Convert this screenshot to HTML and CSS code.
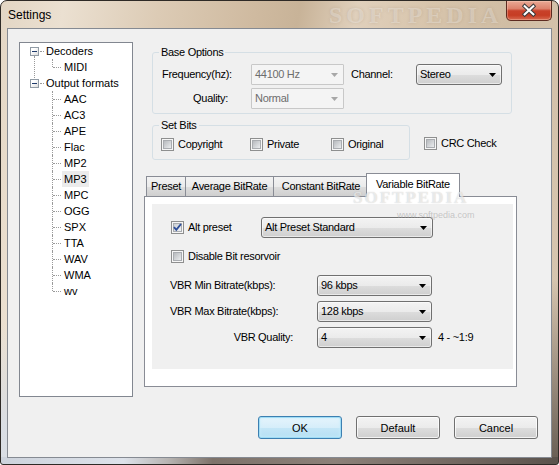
FILE: index.html
```html
<!DOCTYPE html>
<html>
<head>
<meta charset="utf-8">
<title>Settings</title>
<link rel="stylesheet" href="styles.css">
</head>
<body>
<svg class="svgdefs" width="0" height="0" aria-hidden="true">
  <defs>
    <linearGradient id="cbg" x1="0" y1="0" x2="1" y2="1">
      <stop offset="0" stop-color="#b3b6ba"/>
      <stop offset="1" stop-color="#eef0f2"/>
    </linearGradient>
    <linearGradient id="cbgc" x1="0" y1="0" x2="1" y2="1">
      <stop offset="0" stop-color="#c9cdd2"/>
      <stop offset="1" stop-color="#f4f5f6"/>
    </linearGradient>
  </defs>
</svg>
<div class="window">
  <div class="titlebar">
    <span class="title">Settings</span>
    <span class="wm-title">SOFTPEDIA</span>
    <div class="close">
      <svg width="46" height="19" viewBox="0 0 46 19">
        <path d="M18.5 5 L27.5 13.5 M27.5 5 L18.5 13.5" stroke="#3a3a3a" stroke-width="4.2" stroke-linecap="square" fill="none"/>
        <path d="M18.5 5 L27.5 13.5 M27.5 5 L18.5 13.5" stroke="#ffffff" stroke-width="2.2" stroke-linecap="square" fill="none"/>
      </svg>
    </div>
  </div>
  <div class="client">
    <div class="main">
      <div class="tree">
        <div class="row root"><span class="exp"></span><span class="hline"></span><span class="lbl">Decoders</span></div>
        <div class="kids first">
          <div class="row leaf last"><span class="lbl">MIDI</span></div>
        </div>
        <div class="row root"><span class="exp"></span><span class="hline"></span><span class="lbl">Output formats</span></div>
        <div class="kids">
          <div class="row leaf"><span class="lbl">AAC</span></div>
          <div class="row leaf"><span class="lbl">AC3</span></div>
          <div class="row leaf"><span class="lbl">APE</span></div>
          <div class="row leaf"><span class="lbl">Flac</span></div>
          <div class="row leaf"><span class="lbl">MP2</span></div>
          <div class="row leaf"><span class="lbl sel">MP3</span></div>
          <div class="row leaf"><span class="lbl">MPC</span></div>
          <div class="row leaf"><span class="lbl">OGG</span></div>
          <div class="row leaf"><span class="lbl">SPX</span></div>
          <div class="row leaf"><span class="lbl">TTA</span></div>
          <div class="row leaf"><span class="lbl">WAV</span></div>
          <div class="row leaf"><span class="lbl">WMA</span></div>
          <div class="row leaf last"><span class="lbl">wv</span></div>
        </div>
      </div>

      <div class="right">
        <fieldset class="group base">
          <legend>Base Options</legend>
          <div class="base-grid">
            <span class="flabel">Frequency(hz):</span>
            <div class="combo disabled w93"><span class="val">44100 Hz</span><svg class="arrow" width="7" height="4" viewBox="0 0 7 4"><path d="M0 0H7L3.5 4Z" fill="#a7a7a7"/></svg></div>
            <span class="flabel">Channel:</span>
            <div class="combo w86"><span class="val">Stereo</span><svg class="arrow" width="7" height="4" viewBox="0 0 7 4"><path d="M0 0H7L3.5 4Z" fill="#000"/></svg></div>
            <span class="flabel qlabel">Quality:</span>
            <div class="combo disabled w93"><span class="val">Normal</span><svg class="arrow" width="7" height="4" viewBox="0 0 7 4"><path d="M0 0H7L3.5 4Z" fill="#a7a7a7"/></svg></div>
          </div>
        </fieldset>

        <div class="bits-row">
          <fieldset class="group bits">
            <legend>Set Bits</legend>
            <div class="bits-body">
              <label class="check w89"><svg class="cb" width="13" height="13" viewBox="0 0 13 13"><rect x=".5" y=".5" width="12" height="12" fill="#f6f6f6" stroke="#8e8f8f"/><rect x="2.5" y="2.5" width="8" height="8" fill="url(#cbg)" stroke="#a9acb0"/></svg><span>Copyright</span></label>
              <label class="check w81"><svg class="cb" width="13" height="13" viewBox="0 0 13 13"><rect x=".5" y=".5" width="12" height="12" fill="#f6f6f6" stroke="#8e8f8f"/><rect x="2.5" y="2.5" width="8" height="8" fill="url(#cbg)" stroke="#a9acb0"/></svg><span>Private</span></label>
              <label class="check"><svg class="cb" width="13" height="13" viewBox="0 0 13 13"><rect x=".5" y=".5" width="12" height="12" fill="#f6f6f6" stroke="#8e8f8f"/><rect x="2.5" y="2.5" width="8" height="8" fill="url(#cbg)" stroke="#a9acb0"/></svg><span>Original</span></label>
            </div>
          </fieldset>
          <label class="check crc"><svg class="cb" width="13" height="13" viewBox="0 0 13 13"><rect x=".5" y=".5" width="12" height="12" fill="#f6f6f6" stroke="#8e8f8f"/><rect x="2.5" y="2.5" width="8" height="8" fill="url(#cbg)" stroke="#a9acb0"/></svg><span>CRC Check</span></label>
        </div>

        <div class="tabctl">
          <div class="tabs">
            <span class="tab first w-preset">Preset</span>
            <span class="tab w-avg">Average BitRate</span>
            <span class="tab w-const">Constant BitRate</span>
            <span class="tab active">Variable BitRate</span>
          </div>
          <div class="panel">
            <div class="page">
              <div class="alt-row">
                <label class="check w90"><svg class="cb" width="13" height="13" viewBox="0 0 13 13"><rect x=".5" y=".5" width="12" height="12" fill="#f6f6f6" stroke="#8e8f8f"/><rect x="2.5" y="2.5" width="8" height="8" fill="url(#cbgc)" stroke="#a9acb0"/><path d="M3 6.2 L5.3 8.8 L10 3" stroke="#2f4f9a" stroke-width="1.9" fill="none"/></svg><span>Alt preset</span></label>
                <div class="combo w172"><span class="val">Alt Preset Standard</span><svg class="arrow" width="7" height="4" viewBox="0 0 7 4"><path d="M0 0H7L3.5 4Z" fill="#000"/></svg></div>
              </div>
              <div class="dis-row">
                <label class="check"><svg class="cb" width="13" height="13" viewBox="0 0 13 13"><rect x=".5" y=".5" width="12" height="12" fill="#f6f6f6" stroke="#8e8f8f"/><rect x="2.5" y="2.5" width="8" height="8" fill="url(#cbg)" stroke="#a9acb0"/></svg><span>Disable Bit resorvoir</span></label>
              </div>
              <div class="vbr-grid">
                <span class="flabel">VBR Min Bitrate(kbps):</span>
                <div class="combo w115"><span class="val">96 kbps</span><svg class="arrow" width="7" height="4" viewBox="0 0 7 4"><path d="M0 0H7L3.5 4Z" fill="#000"/></svg></div>
                <span></span>
                <span class="flabel">VBR Max Bitrate(kbps):</span>
                <div class="combo w115"><span class="val">128 kbps</span><svg class="arrow" width="7" height="4" viewBox="0 0 7 4"><path d="M0 0H7L3.5 4Z" fill="#000"/></svg></div>
                <span></span>
                <span class="flabel vq">VBR Quality:</span>
                <div class="combo w115"><span class="val">4</span><svg class="arrow" width="7" height="4" viewBox="0 0 7 4"><path d="M0 0H7L3.5 4Z" fill="#000"/></svg></div>
                <span class="flabel ratio">4 - ~1:9</span>
              </div>
            </div>
          </div>
          <span class="wm-tab">SOFTPEDIA</span>
          <span class="wm-url">www.softpedia.com</span>
        </div>
      </div>
    </div>

    <div class="buttons">
      <button class="btn default">OK</button>
      <button class="btn">Default</button>
      <button class="btn">Cancel</button>
    </div>
  </div>
</div>
</body>
</html>
```
FILE: styles.css
```css
html, body {
  margin: 0;
  padding: 0;
  background: #ffffff;
}

body {
  font-family: "Liberation Sans", Arial, sans-serif;
  font-size: 11px;
  color: #000;
}

.svgdefs {
  position: absolute;
  width: 0;
  height: 0;
  overflow: hidden;
}

.window {
  position: relative;
  width: 559px;
  height: 465px;
  box-sizing: border-box;
  border: 1px solid #2e2a26;
  border-radius: 7px 7px 3px 3px;
  padding: 0 6px 6px 6px;
  display: flex;
  flex-direction: column;
  overflow: hidden;
  background:
    linear-gradient(to right, #cdd3dc 0%, #dde2ea 22%, #b7b4b2 30%, #7d726a 38%, #8c8179 60%, #6f655e 85%, #5a524c 100%) left bottom / 100% 7px no-repeat,
    linear-gradient(to bottom, rgba(255,255,255,0) 70%, rgba(215,222,232,0.85) 92%) left top / 7px 100% no-repeat,
    linear-gradient(to bottom, rgba(90,80,72,0) 60%, rgba(90,80,72,0.9) 100%) right top / 7px 100% no-repeat,
    linear-gradient(100deg, #e3d6c4 0%, #ebe0d1 10%, #dccbb5 25%, #cfbaa0 40%, #c8b398 47%, #e0d0bc 56%, #d7c4ab 68%, #d0bda4 80%, #d9c8b3 100%);
}

/* ---------- title bar ---------- */
.titlebar {
  position: relative;
  height: 27px;
  display: flex;
  align-items: flex-start;
  flex: none;
}

.title {
  padding: 7px 0 0 1px;
  font-size: 12px;
  line-height: 15px;
  color: #000;
}

.wm-title {
  position: absolute;
  left: 322px;
  top: 1px;
  font: bold 24px "Liberation Serif", serif;
  letter-spacing: 4px;
  color: rgba(255, 255, 255, 0.28);
  text-shadow: 0 0 3px rgba(140, 120, 100, 0.25);
}

.close {
  margin-left: auto;
  margin-right: 0;
  width: 46px;
  height: 20px;
  box-sizing: border-box;
  border: 1px solid #5d2a20;
  border-top: none;
  border-radius: 0 0 5px 5px;
  background: linear-gradient(#e9a995 0%, #dc826c 40%, #c8412a 52%, #c63d24 75%, #d86a50 100%);
  box-shadow: inset 0 0 0 1px rgba(255, 220, 200, 0.35);
  display: flex;
  align-items: flex-start;
  justify-content: center;
}

/* ---------- client ---------- */
.client {
  flex: 1;
  background: #f0f0f0;
  border: 1px solid #858a92;
  padding: 13px 13px 0 11px;
  display: flex;
  flex-direction: column;
  min-height: 0;
}

.main {
  display: grid;
  grid-template-columns: 114px 373px;
  column-gap: 11px;
  align-items: start;
}

/* ---------- tree ---------- */
.tree {
  height: 355px;
  box-sizing: border-box;
  border: 1px solid #828790;
  background: #ffffff;
  line-height: 16px;
}

.row {
  position: relative;
  height: 16px;
  display: flex;
  align-items: center;
}

.root {
  padding-left: 10px;
}

.exp {
  position: relative;
  flex: none;
  width: 9px;
  height: 9px;
  box-sizing: border-box;
  border: 1px solid #919ba5;
  background: linear-gradient(135deg, #ffffff 30%, #dcdcdc);
}

.exp::after {
  content: "";
  position: absolute;
  left: 1px;
  top: 3px;
  width: 5px;
  height: 1px;
  background: #1e3a6a;
}

.hline {
  flex: none;
  width: 4px;
  height: 0;
  margin-left: 1px;
  border-top: 1px dotted #9a9a9a;
}

.lbl {
  display: block;
  padding: 0 2px;
  height: 16px;
  line-height: 16px;
  white-space: nowrap;
}

.lbl.sel {
  background: #ebebeb;
}

.leaf {
  padding-left: 42px;
}

.leaf::before {
  content: "";
  position: absolute;
  left: 32px;
  top: 0;
  height: 16px;
  border-left: 1px dotted #9a9a9a;
}

.leaf.last::before {
  height: 8px;
}

.leaf::after {
  content: "";
  position: absolute;
  left: 33px;
  top: 8px;
  width: 8px;
  border-top: 1px dotted #9a9a9a;
}

.kids {
  position: relative;
}

.kids.first::before {
  content: "";
  position: absolute;
  left: 14px;
  top: -3px;
  bottom: -3px;
  border-left: 1px dotted #9a9a9a;
}

/* ---------- right column ---------- */
.right {
  display: flex;
  flex-direction: column;
  padding-top: 4px;
  letter-spacing: -0.3px;
}

fieldset.group {
  margin: 0 0 0 8px;
  padding: 0;
  border: 1px solid #d5dfe5;
  border-radius: 3px;
  min-width: 0;
  box-sizing: border-box;
}

fieldset.group legend {
  margin-left: 6px;
  padding: 0 2px;
  line-height: 13px;
  font-size: 11px;
}

.base {
  width: 360px;
}

.base-grid {
  display: grid;
  grid-template-columns: 89px 100px 65px 86px;
  grid-auto-rows: 21px;
  row-gap: 3px;
  padding: 5px 0 4px 9px;
  align-items: center;
}

.flabel {
  line-height: 13px;
  white-space: nowrap;
}

.qlabel {
  text-align: right;
  padding-right: 23px;
}

.combo {
  box-sizing: border-box;
  height: 21px;
  border: 1px solid #707070;
  border-radius: 3px;
  background: linear-gradient(#f3f3f3 0%, #ebebeb 50%, #dddddd 51%, #cfcfcf 100%);
  box-shadow: inset 0 0 0 1px rgba(255, 255, 255, 0.55);
  display: flex;
  align-items: center;
  padding: 0 5px 0 3px;
  white-space: nowrap;
}

.combo .val {
  flex: 1;
  line-height: 13px;
}

.combo .arrow {
  flex: none;
  display: block;
}

.combo.disabled {
  border-color: #c8c8c8;
  border-radius: 1px;
  background: #f4f4f4;
  color: #6d6d6d;
  box-shadow: none;
}

.w93 { width: 93px; }
.w86 { width: 86px; }
.w172 { width: 172px; }
.w115 { width: 115px; }

/* set bits */
.bits-row {
  display: flex;
  align-items: flex-end;
  margin-top: 5px;
}

.bits {
  width: 258px;
}

.bits-body {
  display: flex;
  padding: 5px 0 7px 8px;
}

.check {
  display: flex;
  align-items: center;
  gap: 4px;
  height: 15px;
  line-height: 13px;
  white-space: nowrap;
}

.check .cb {
  flex: none;
  display: block;
}

.w89 { width: 89px; }
.w81 { width: 81px; }
.w90 { width: 90px; flex: none; }

.crc {
  margin-left: 14px;
  margin-bottom: 9px;
}

/* ---------- tab control ---------- */
.tabctl {
  position: relative;
  margin-top: 13px;
  display: flex;
  flex-direction: column;
}

.tabs {
  display: flex;
  align-items: flex-end;
  height: 23px;
  padding-left: 2px;
}

.tab {
  box-sizing: border-box;
  height: 20px;
  border: 1px solid #898c95;
  border-bottom: none;
  border-left: none;
  background: linear-gradient(#f3f3f3 0%, #ebebeb 50%, #dddddd 51%, #cfcfcf 100%);
  display: flex;
  align-items: center;
  justify-content: center;
  white-space: nowrap;
  line-height: 13px;
  flex: none;
}

.tab.first {
  border-left: 1px solid #898c95;
}

.w-preset { width: 40px; }
.w-avg { width: 88px; }
.w-const { width: 95px; }

.tab.active {
  position: relative;
  z-index: 1;
  width: 94px;
  height: 24px;
  margin-left: -3px;
  margin-bottom: -1px;
  border-left: 1px solid #898c95;
  background: #ffffff;
  padding-bottom: 3px;
}

.panel {
  box-sizing: border-box;
  width: 373px;
  height: 191px;
  border: 1px solid #898c95;
  background: #ffffff;
  padding: 7px 3px 17px 7px;
}

.page {
  height: 100%;
  box-sizing: border-box;
  background: #f0f0f0;
  padding-top: 13px;
}

.alt-row {
  display: flex;
  align-items: center;
  height: 21px;
  padding-left: 19px;
}

.dis-row {
  margin-top: 11px;
  padding-left: 19px;
}

.vbr-grid {
  margin-top: 11px;
  display: grid;
  grid-template-columns: 147px 115px auto;
  grid-auto-rows: 21px;
  row-gap: 5px;
  padding-left: 18px;
  align-items: center;
}

.vq {
  text-align: right;
  padding-right: 24px;
}

.ratio {
  padding-left: 6px;
}

.wm-tab {
  position: absolute;
  z-index: 2;
  left: 209px;
  top: 16px;
  font: bold 17px "Liberation Serif", serif;
  line-height: 17px;
  letter-spacing: 2px;
  color: rgba(255, 255, 255, 0.6);
  text-shadow: 0 0 1px rgba(130, 130, 130, 0.45);
  pointer-events: none;
}

.wm-url {
  position: absolute;
  z-index: 2;
  left: 253px;
  top: 37px;
  font-size: 9px;
  line-height: 10px;
  letter-spacing: 0;
  color: rgba(160, 160, 160, 0.55);
  pointer-events: none;
}

/* ---------- buttons ---------- */
.buttons {
  display: flex;
  justify-content: flex-end;
  gap: 14px;
  margin-top: 19px;
}

.btn {
  width: 84px;
  height: 23px;
  box-sizing: border-box;
  margin: 0;
  padding: 0;
  border: 1px solid #707070;
  border-radius: 3px;
  background: linear-gradient(#f3f3f3 0%, #ebebeb 50%, #dddddd 51%, #cfcfcf 100%);
  box-shadow: inset 0 0 0 1px rgba(255, 255, 255, 0.75);
  font-family: "Liberation Sans", Arial, sans-serif;
  font-size: 11px;
  color: #000;
}

.btn.default {
  border-color: #3c7fb1;
  background: linear-gradient(#e6f4fc 0%, #d6eefa 50%, #c4e6f7 51%, #b6dff3 100%);
  box-shadow: inset 0 0 0 1px #9fdcf5, inset 0 0 3px 1px #c8eefb;
}
```
